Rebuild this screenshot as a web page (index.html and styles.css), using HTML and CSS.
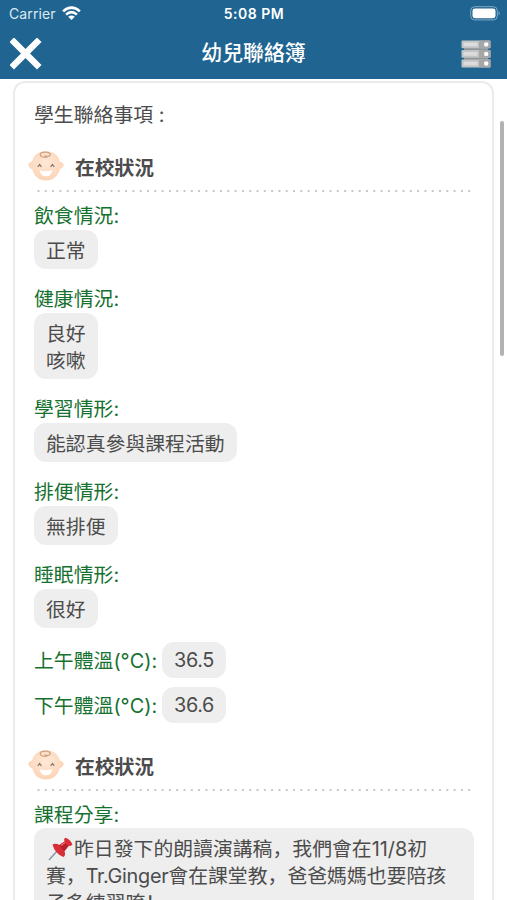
FILE: index.html
```html
<!DOCTYPE html>
<html lang="zh-Hant">
<head>
  <meta charset="UTF-8">
  <meta name="viewport" content="width=device-width, initial-scale=1.0">
  <title>幼兒聯絡簿</title>
  <link rel="stylesheet" href="styles.css">
</head>
<body>
  <svg width="0" height="0" class="defs">
    <defs>
      <radialGradient id="skin" cx="50%" cy="40%" r="65%">
        <stop offset="0" stop-color="#ffe9d8"/>
        <stop offset="1" stop-color="#fbd1b2"/>
      </radialGradient>
      <symbol id="baby" viewBox="0 0 36 30">
        <path d="M18 .3C26 .3 30.8 5 31.8 10.5C34 11 35.9 12.6 35.7 14.3C35.5 16 33.6 18 31.6 18.5C30 25.3 25 29.4 18 29.4S6 25.3 4.4 18.5C2.4 18 .5 16 .3 14.3C.1 12.6 2 11 4.2 10.5C5.2 5 10 .3 18 .3Z" fill="url(#skin)"/>
        <path d="M19.5 6C16 7.2 12.1 5.6 12.2 3.5C12.5.8 21.5.2 22.2 3.2C22.6 5.7 17.1 6.4 16.9 4.2" fill="none" stroke="#cba385" stroke-width="1.3"/>
        <path d="M9.8 15.8L11.6 13.4L13.4 15.8M22.6 15.8L24.4 13.4L26.2 15.8" fill="none" stroke="#87786c" stroke-width="1.2"/>
        <path d="M11.8 19.3Q18 21 24.2 19.3Q23.5 25.3 18 25.3Q12.5 25.3 11.8 19.3Z" fill="#fff"/>
      </symbol>
    </defs>
  </svg>

  <header class="header">
    <div class="status-bar">
      <div class="carrier">
        <span>Carrier</span>
        <svg width="19" height="15" viewBox="0 0 19 15" fill="none" stroke="#fff" stroke-width="2.6">
          <path d="M1.1 5.4Q9.5-2.2 17.9 5.4M4.1 8.6Q9.5 3.8 14.9 8.6"/>
          <path d="M9.5 14L6.2 10.8Q9.5 8 12.8 10.8Z" fill="#fff" stroke="none"/>
        </svg>
      </div>
      <div class="time">5:08 PM</div>
      <svg class="battery" width="31" height="15" viewBox="0 0 31 15">
        <rect x=".7" y=".7" width="26.6" height="13.2" rx="4" fill="none" stroke="#7fa9c5" stroke-width="1"/>
        <rect x="2.5" y="2.4" width="23" height="9.8" rx="2.4" fill="#fff"/>
        <path d="M28.6 5Q31 7.3 28.6 9.6Z" fill="#7fa9c5"/>
      </svg>
    </div>
    <div class="nav">
      <svg width="32" height="32" viewBox="0 0 32 32">
        <path d="M4 4L27 27M27 4L4 27" stroke="#fff" stroke-width="6.4" stroke-linecap="square"/>
      </svg>
      <h1>幼兒聯絡簿</h1>
      <svg width="30" height="28" viewBox="0 0 30 28">
        <path d="M3 7H27V21H3Z" fill="#8e9497"/>
        <g fill="#c2c3c5">
          <rect x=".5" y=".5" width="29" height="7.8" rx="1"/>
          <rect x=".5" y="10" width="29" height="7.8" rx="1"/>
          <rect x=".5" y="19.6" width="29" height="7.8" rx="1"/>
        </g>
        <path d="M18 .5H28.5Q29.5.5 29.5 1.5V7.3Q29.5 8.3 28.5 8.3H18ZM18 10H29.5V17.8H18ZM18 19.6H29.5V27.4H18Z" fill="#a5a6a8"/>
        <path d="M2.5 2.6H16.5V6.2H2.5ZM2.5 12.1H16.5V15.7H2.5ZM2.5 21.7H16.5V25.3H2.5Z" fill="#dcdcdd"/>
        <g fill="#fff">
          <circle cx="25.2" cy="4.4" r="2.2"/>
          <circle cx="25.2" cy="13.9" r="2.2"/>
          <circle cx="25.2" cy="23.5" r="2.2"/>
        </g>
      </svg>
    </div>
  </header>

  <main class="card">
    <div class="intro">學生聯絡事項 :</div>

    <div class="section-title">
      <svg width="36" height="30"><use href="#baby"/></svg>
      <h2>在校狀況</h2>
    </div>
    <svg class="dots" width="440" height="2"><path d="M3.5 1H439" stroke="#c8c8c8" stroke-width="2" stroke-dasharray="2 5.3"/></svg>
    <div class="field">
      <div class="label">飲食情況:</div>
      <div class="value">正常</div>
    </div>
    <div class="field">
      <div class="label">健康情況:</div>
      <div class="value">良好<br>咳嗽</div>
    </div>
    <div class="field">
      <div class="label">學習情形:</div>
      <div class="value">能認真參與課程活動</div>
    </div>
    <div class="field">
      <div class="label">排便情形:</div>
      <div class="value">無排便</div>
    </div>
    <div class="field">
      <div class="label">睡眠情形:</div>
      <div class="value">很好</div>
    </div>
    <div class="temperatures">
      <div class="field-row">
        <div class="label">上午體溫(°C):</div>
        <div class="value">36.5</div>
      </div>
      <div class="field-row">
        <div class="label">下午體溫(°C):</div>
        <div class="value">36.6</div>
      </div>
    </div>

    <div class="section-title second">
      <svg width="36" height="30"><use href="#baby"/></svg>
      <h2>在校狀況</h2>
    </div>
    <svg class="dots" width="440" height="2"><path d="M3.5 1H439" stroke="#c8c8c8" stroke-width="2" stroke-dasharray="2 5.3"/></svg>
    <div class="field">
      <div class="label">課程分享:</div>
      <div class="value wide">
        <svg class="pin" width="27" height="24" viewBox="0 0 27 24">
          <path d="M2 23L11 13" stroke="#8797a5" stroke-width="1.5"/>
          <path d="M5.5 7.5Q9 6 12.5 8L17.5 4.5Q16.5 2 18 .8Q23 2 25.5 7.5Q23.5 9.5 21.5 9L17.5 14Q19 18 16.5 20Q8 17 5.5 7.5Z" fill="#d92e38"/>
          <path d="M12.5 8Q14 12.5 17.5 14L21.5 9Q18.5 8 17.5 4.5Z" fill="#b71f2b"/>
          <path d="M14 8.5L18 5.5" stroke="#f36c70" stroke-width="1.3"/>
        </svg>昨日發下的朗讀演講稿<span class="punct" lang="zh-Hans">，</span>我們會在11/8初<br>賽<span class="punct" lang="zh-Hans">，</span><span class="latin">Tr.Ginger</span>會在課堂教<span class="punct" lang="zh-Hans">，</span>爸爸媽媽也要陪孩<br>子多練習唷<span class="punct" lang="zh-Hans">！</span>
      </div>
    </div>
  </main>
  <div class="scrollbar"></div>
</body>
</html>
```
FILE: styles.css
```css
* {
  box-sizing: border-box;
}

body {
  margin: 0;
  height: 900px;
  overflow: hidden;
  background-color: #fff;
  color: #4c4c4c;
  font-family: Inter, "Noto Sans CJK TC", sans-serif;
  font-size: 19.85px;
  line-height: 27px;
}

svg {
  display: block;
  flex-shrink: 0;
}

.defs {
  position: absolute;
}

.header {
  height: 79px;
  background-color: #206591;
  color: #fff;
}

.status-bar {
  display: grid;
  grid-template-columns: 1fr auto 1fr;
  align-items: center;
  height: 27px;
  padding: 0 6px 0 9px;
  font-size: 14px;
}

.carrier {
  display: flex;
  align-items: center;
  gap: 6px;
  color: #dce9f2;
  letter-spacing: 0.1px;
}

.time {
  margin-right: 2px;
  font-weight: 600;
  letter-spacing: 0.5px;
}

.battery {
  justify-self: end;
}

.nav {
  display: grid;
  grid-template-columns: 32px 1fr 30px;
  align-items: center;
  height: 52px;
  padding: 1px 16px 0 10px;
}

.nav h1 {
  margin: 0 0 2px 4px;
  font-size: 20.9px;
  font-weight: 500;
  text-align: center;
}

.card {
  width: 481px;
  height: 819px;
  margin: 2px 0 0 13px;
  padding: 19px 19px 0 20px;
  border: 2px solid #ebebed;
  border-bottom: none;
  border-radius: 12px 12px 0 0;
  overflow: hidden;
}

.intro {
  margin-left: -1px;
}

.section-title {
  display: flex;
  align-items: center;
  gap: 11px;
  height: 36px;
  margin: 20px 0 0 -7px;
}

.section-title svg {
  margin-top: -2px;
}

.section-title h2 {
  margin: 3px 0 0;
  font-size: 19.8px;
  font-weight: 700;
}

.section-title.second {
  margin-top: 25px;
}

.dots {
  margin: 5px 0 10px -1px;
}

.field {
  margin: 0 0 16px -1px;
}

.label {
  position: relative;
  top: 1px;
  color: #16712f;
}

.value {
  width: fit-content;
  margin-top: 1px;
  padding: 8px 12px 4px;
  border-radius: 12px;
  background-color: #eee;
}

.value.wide {
  width: 440px;
  margin-top: 0;
  white-space: nowrap;
}

.temperatures {
  margin-top: -2px;
}

.field-row {
  display: flex;
  align-items: center;
  gap: 5px;
  height: 36px;
  margin: 0 0 9px -1px;
}

.field-row .value {
  margin: 0;
  padding: 5px 12px 4px;
  letter-spacing: -0.4px;
}

.pin {
  display: inline-block;
  margin: -4px 0 -4px 1px;
  vertical-align: -1px;
}

.punct {
  font-family: "Noto Sans CJK SC", sans-serif;
  line-height: 0;
}

.latin {
  letter-spacing: -0.3px;
}

.scrollbar {
  position: absolute;
  top: 121px;
  right: 3px;
  width: 4px;
  height: 235px;
  border-radius: 2px;
  background-color: #b2b2b2;
}
```
